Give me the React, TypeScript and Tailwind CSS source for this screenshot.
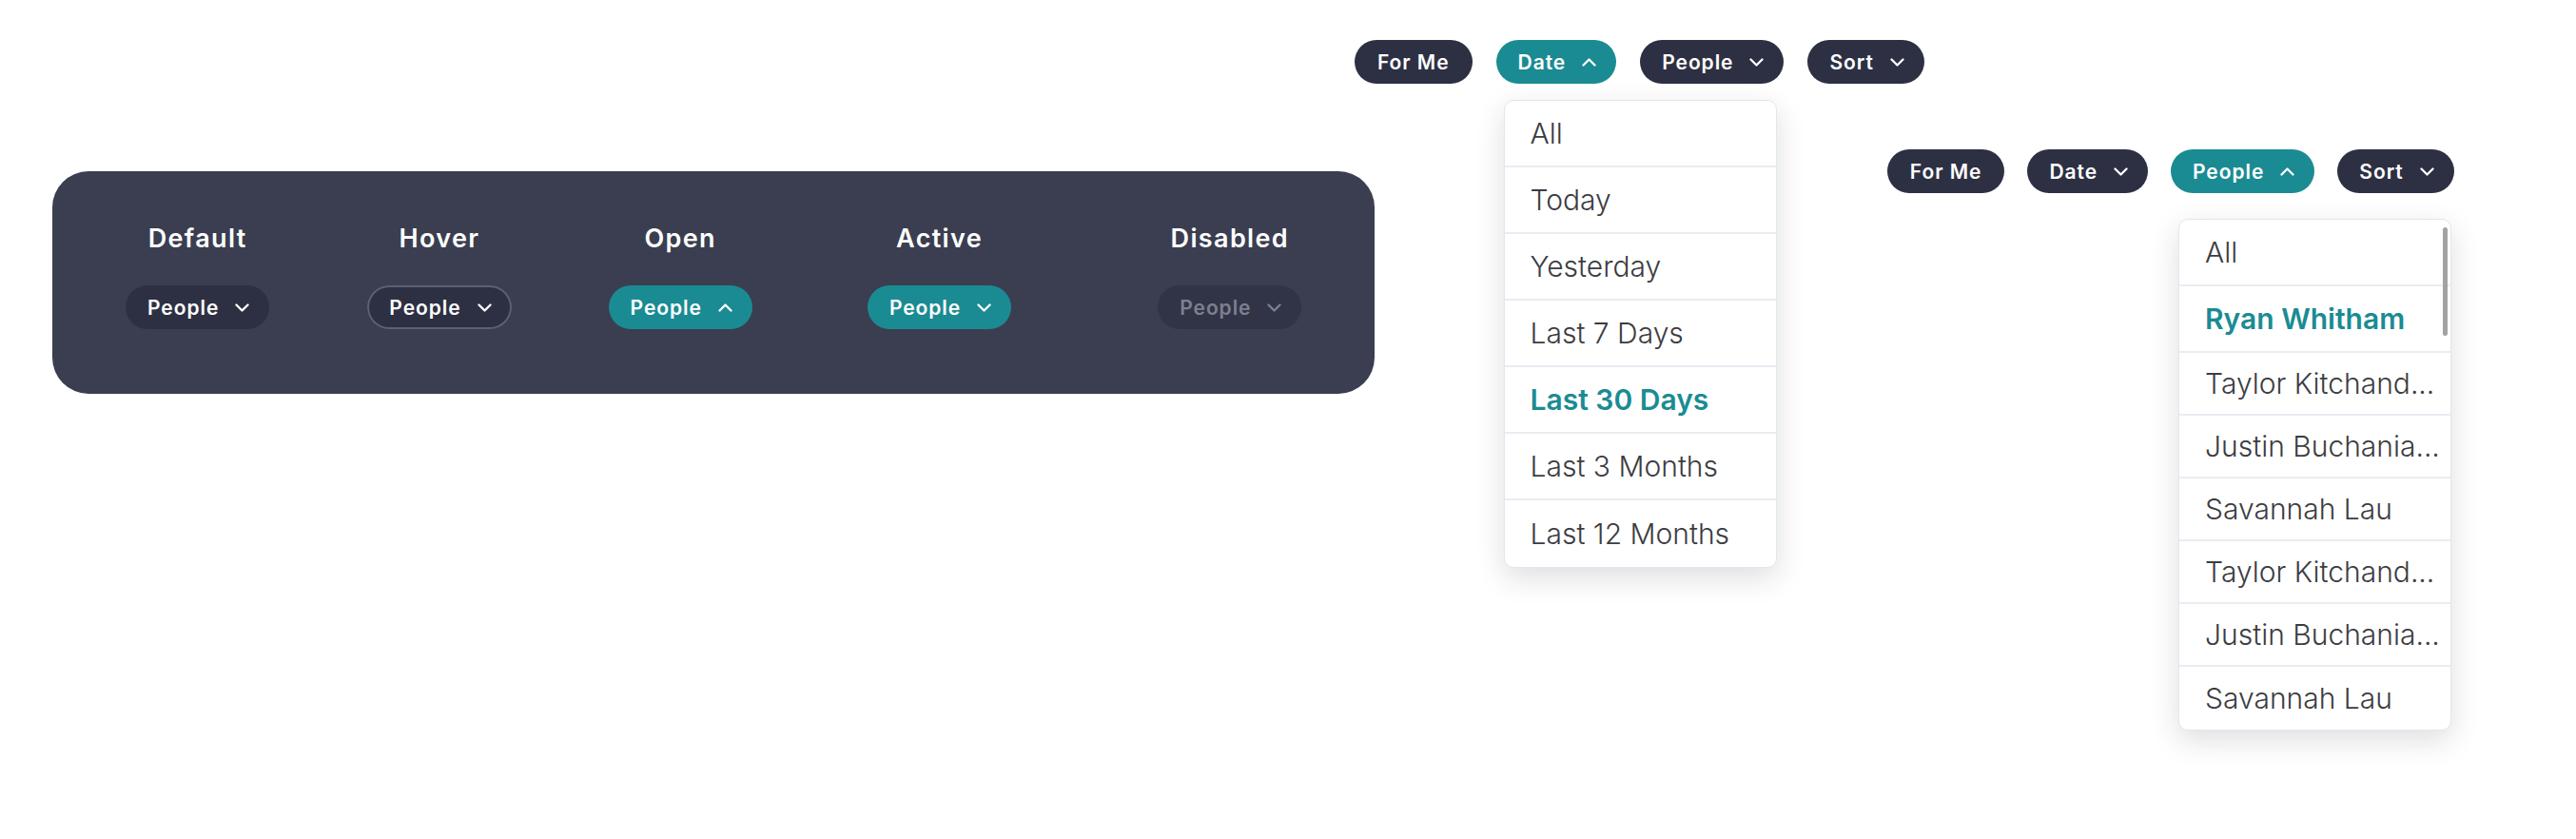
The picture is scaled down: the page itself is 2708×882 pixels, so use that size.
import React from "react";

type Variant = "dark" | "teal" | "hover" | "disabled";

const Chevron = ({ up = false, className = "" }: { up?: boolean; className?: string }) => (
  <svg
    viewBox="0 0 15 9"
    className={`w-[15px] h-[9px] ${className}`}
    fill="none"
    stroke="currentColor"
    strokeWidth={2.3}
    strokeLinecap="round"
    strokeLinejoin="round"
  >
    {up ? <path d="M1.5 7.5 L7.5 1.5 L13.5 7.5" /> : <path d="M1.5 1.5 L7.5 7.5 L13.5 1.5" />}
  </svg>
);

const variantClass: Record<Variant, string> = {
  dark: "bg-[#2d3043] text-white",
  teal: "bg-[#1b8b93] text-white",
  hover: "bg-[#2d3043] text-white shadow-[inset_0_0_0_2px_#5c6075]",
  disabled: "bg-[#313447] text-[#7d808e]",
};

const Pill = ({
  label,
  variant = "dark",
  chevron = true,
  up = false,
}: {
  label: string;
  variant?: Variant;
  chevron?: boolean;
  up?: boolean;
}) => (
  <div
    className={`h-[46px] rounded-full flex items-center gap-[17px] ${
      chevron ? "pl-[23px] pr-[21px]" : "px-[24px]"
    } text-[21px] font-semibold tracking-[0.045em] leading-none whitespace-nowrap ${variantClass[variant]}`}
  >
    <span>{label}</span>
    {chevron && <Chevron up={up} />}
  </div>
);

const states: { title: string; variant: Variant; up?: boolean; ml: string }[] = [
  { title: "Default", variant: "dark", ml: "ml-[77px]" },
  { title: "Hover", variant: "hover", ml: "ml-[103px]" },
  { title: "Open", variant: "teal", up: true, ml: "ml-[102px]" },
  { title: "Active", variant: "teal", ml: "ml-[121px]" },
  { title: "Disabled", variant: "disabled", ml: "ml-[154px]" },
];

const dateOptions = ["All", "Today", "Yesterday", "Last 7 Days", "Last 30 Days", "Last 3 Months", "Last 12 Months"];
const people = [
  "All",
  "Ryan Whitham",
  "Taylor Kitchand...",
  "Justin Buchania...",
  "Savannah Lau",
  "Taylor Kitchand...",
  "Justin Buchania...",
  "Savannah Lau",
];

const Menu = ({
  items,
  selected,
  rowH,
  scroll = false,
}: {
  items: string[];
  selected: number;
  rowH: (i: number) => string;
  scroll?: boolean;
}) => (
  <div className="w-[287px] bg-white rounded-[10px] border border-[#e3e6ec] shadow-[0_10px_30px_rgba(30,35,50,0.15)] overflow-hidden relative">
    {items.map((it, i) => (
      <div
        key={i}
        className={`${rowH(i)} shrink-0 flex items-center pl-[27px] pr-[10px] text-[30px] whitespace-nowrap ${
          i < items.length - 1 ? "border-b-2 border-[#e9edf2]" : ""
        } ${i === selected ? "text-[#1b8b93] font-semibold" : "text-[#3c3c42] font-light"}`}
      >
        <span className="leading-[1.35]">{it}</span>
      </div>
    ))}
    {scroll && (
      <div className="absolute right-[3px] top-[8px] w-[5px] h-[114px] rounded-full bg-[#a2a2a2]" />
    )}
  </div>
);

export default function App() {
  return (
    <div className="w-[2708px] min-h-[882px] bg-white flex items-start font-['Inter',sans-serif]">
      <section className="ml-[55px] mt-[180px] w-[1390px] h-[234px] shrink-0 rounded-[38px] bg-[#3a3e50] flex items-start pt-[54px]">
        {states.map((s) => (
          <div key={s.title} className={`${s.ml} flex flex-col items-center gap-[32px]`}>
            <div className="text-[27px] leading-[34px] font-semibold text-white tracking-[0.05em]">{s.title}</div>
            <Pill label="People" variant={s.variant} up={s.up} />
          </div>
        ))}
      </section>

      <div className="ml-[-21px] mt-[42px] flex items-start gap-[25px] shrink-0">
        <Pill label="For Me" chevron={false} />
        <div className="relative">
          <Pill label="Date" variant="teal" up />
          <div className="absolute left-[8px] top-[63px] z-10">
            <Menu items={dateOptions} selected={4} rowH={() => "h-[70px]"} />
          </div>
        </div>
        <Pill label="People" />
        <Pill label="Sort" />
      </div>

      <div className="ml-[-39px] mt-[157px] flex items-start gap-[24px] shrink-0">
        <Pill label="For Me" chevron={false} />
        <Pill label="Date" />
        <div className="relative">
          <Pill label="People" variant="teal" up />
          <div className="absolute left-[8px] top-[73px] z-10">
            <Menu
              items={people}
              selected={1}
              rowH={(i) => (i < 2 ? "h-[70px]" : "h-[66px]")}
              scroll
            />
          </div>
        </div>
        <Pill label="Sort" />
      </div>
    </div>
  );
}
